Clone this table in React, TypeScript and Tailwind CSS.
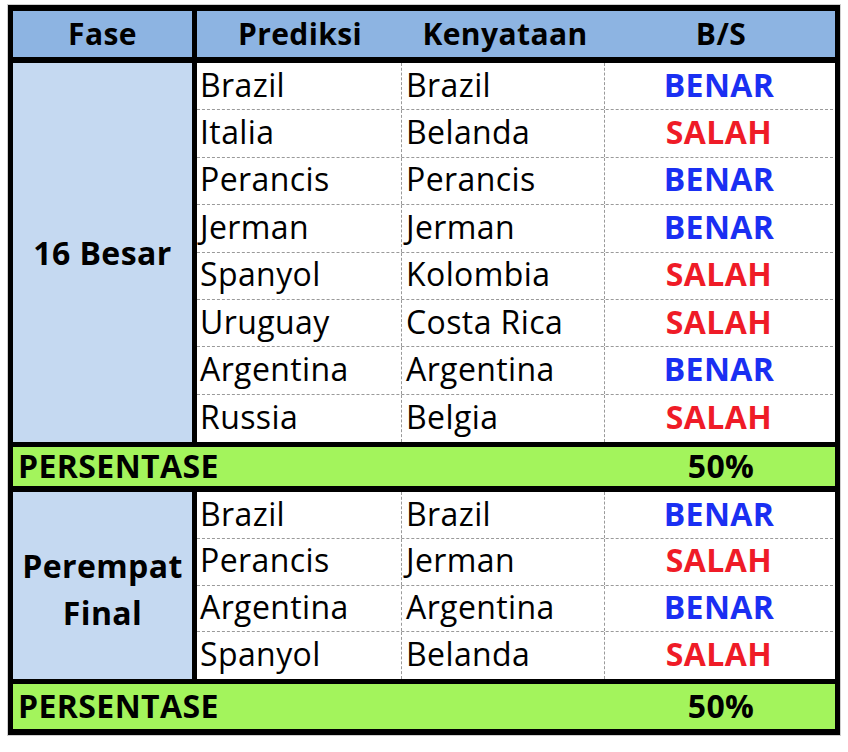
import React from "react";

type Row = { p: string; k: string; ok: boolean };

const s1: Row[] = [
  { p: "Brazil", k: "Brazil", ok: true },
  { p: "Italia", k: "Belanda", ok: false },
  { p: "Perancis", k: "Perancis", ok: true },
  { p: "Jerman", k: "Jerman", ok: true },
  { p: "Spanyol", k: "Kolombia", ok: false },
  { p: "Uruguay", k: "Costa Rica", ok: false },
  { p: "Argentina", k: "Argentina", ok: true },
  { p: "Russia", k: "Belgia", ok: false },
];

const s2: Row[] = [
  { p: "Brazil", k: "Brazil", ok: true },
  { p: "Perancis", k: "Jerman", ok: false },
  { p: "Argentina", k: "Argentina", ok: true },
  { p: "Spanyol", k: "Belanda", ok: false },
];

function Rows({ rows, h }: { rows: Row[]; h: string }) {
  return (
    <div className="flex flex-col bg-white">
      {rows.map((r, i) => (
        <div
          key={i}
          className={`flex ${h} ${i < rows.length - 1 ? "border-b border-dashed border-[#9a9a9a]" : ""}`}
        >
          <div className="w-[205px] border-r border-dashed border-[#9a9a9a] pl-[3px] flex items-center pb-[3px]">
            {r.p}
          </div>
          <div className="w-[203px] border-r border-dashed border-[#9a9a9a] pl-[4px] flex items-center pb-[3px]">
            {r.k}
          </div>
          <div
            className={`w-[228px] flex items-center justify-center font-bold pb-[3px] ${
              r.ok ? "text-[#1a2ff2]" : "text-[#ef1b27]"
            }`}
          >
            {r.ok ? "BENAR" : "SALAH"}
          </div>
        </div>
      ))}
    </div>
  );
}

function Green({ last }: { last?: boolean }) {
  return (
    <div
      className={`flex h-[50px] bg-[#a3f45c] border-t-[5px] border-black ${
        last ? "" : "border-b-[6px]"
      } font-bold`}
    >
      <div className="w-[594px] pl-[5px] flex items-center pb-[1px]">PERSENTASE</div>
      <div className="w-[228px] flex items-center justify-center pb-[1px]">50%</div>
    </div>
  );
}

export default function App() {
  return (
    <div className="bg-white w-[848px] h-[752px] pt-[5px] pl-[8px]" style={{ fontFamily: "'Open Sans', Lato, sans-serif" }}>
      <div className="w-[832px] border-x-[5px] border-t-[6px] border-b-[6px] border-black text-[32px] tracking-[0.4px] text-black leading-none outline outline-1 outline-[#cfcfcf]">
        {/* header */}
        <div className="flex h-[52px] bg-[#8db4e2] border-b-[6px] border-black font-bold text-[30px]">
          <div className="w-[179px] flex items-center justify-center pb-[1px]">Fase</div>
          <div className="w-[5px] bg-black" />
          <div className="w-[206px] flex items-center justify-center pb-[1px]">Prediksi</div>
          <div className="w-[204px] flex items-center justify-center pb-[1px]">Kenyataan</div>
          <div className="w-[228px] flex items-center justify-center pb-[1px]">B/S</div>
        </div>
        {/* section 1 */}
        <div className="flex">
          <div className="w-[179px] bg-[#c5d9f1] flex items-center justify-center font-bold">16 Besar</div>
          <div className="w-[5px] bg-black" />
          <Rows rows={s1} h="h-[47.4px]" />
        </div>
        <Green />
        {/* section 2 */}
        <div className="flex">
          <div className="w-[179px] bg-[#c5d9f1] flex flex-col items-center justify-center font-bold leading-[47px] pt-[6px]">
            <span>Perempat</span>
            <span>Final</span>
          </div>
          <div className="w-[5px] bg-black" />
          <Rows rows={s2} h="h-[46.75px]" />
        </div>
        <Green last />
      </div>
    </div>
  );
}
